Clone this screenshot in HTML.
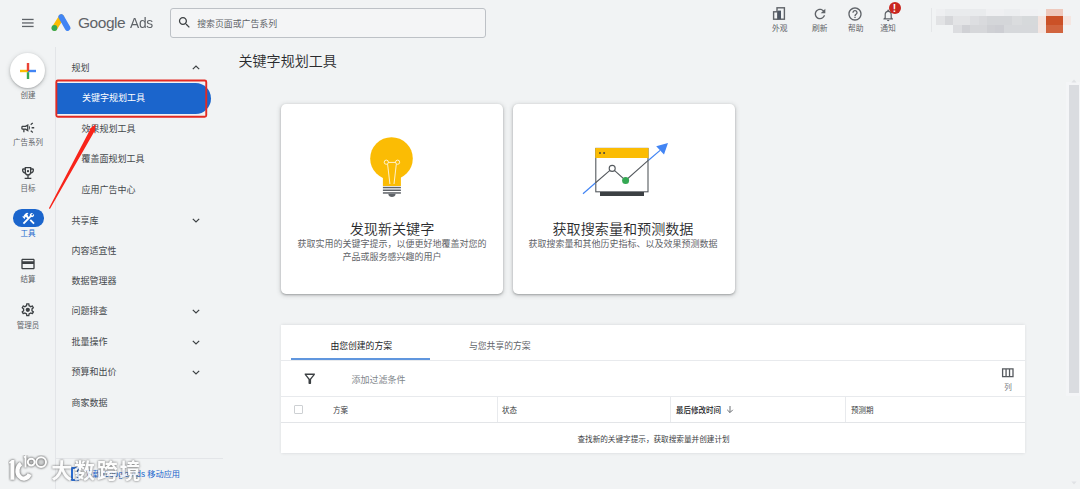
<!DOCTYPE html>
<html lang="zh-CN">
<head>
<meta charset="utf-8">
<title>关键字规划工具 - Google Ads</title>
<style>
html,body{margin:0;padding:0;}
body{width:1080px;height:489px;overflow:hidden;background:#f1f3f4;position:relative;
  font-family:"Liberation Sans","Noto Sans CJK SC",sans-serif;color:#3c4043;}
.abs{position:absolute;}
.t{position:absolute;white-space:nowrap;line-height:1;}
.mz{position:absolute;filter:blur(0.4px);}
#search{left:170px;top:8px;width:314px;height:28px;border:1px solid #bdc1c6;border-radius:3px;background:#f4f5f6;box-sizing:content-box;}
.rl{position:absolute;left:0;width:56px;text-align:center;font-size:7.5px;color:#5f6368;line-height:1;white-space:nowrap;}
.nv{position:absolute;font-size:9px;color:#44484c;line-height:1;white-space:nowrap;}
.chev{position:absolute;left:191.5px;width:8px;height:5px;}
.tl{position:absolute;font-size:7.75px;color:#5f6368;line-height:1;white-space:nowrap;}
.card{position:absolute;background:#fff;border-radius:5px;box-shadow:0 1px 2px rgba(60,64,67,.35),0 1px 4px 1px rgba(60,64,67,.18);}
.ct{position:absolute;left:0;width:100%;text-align:center;white-space:nowrap;line-height:1;}
.hl{position:absolute;left:281px;width:744px;height:1px;background:#e8eaed;}
.vl{position:absolute;top:397px;width:1px;height:25px;background:#e8eaed;}
.th{position:absolute;top:406.9px;font-size:7.5px;color:#3c4043;line-height:1;white-space:nowrap;}
</style>
</head>
<body>

<!-- ============ TOP BAR ============ -->
<svg class="abs" style="left:21px;top:18px" width="14" height="10" viewBox="0 0 14 10">
  <rect x="1" y="0.8" width="11.6" height="1.3" fill="#5f6368"/>
  <rect x="1" y="4.3" width="11.6" height="1.3" fill="#5f6368"/>
  <rect x="1" y="7.8" width="11.6" height="1.3" fill="#5f6368"/>
</svg>
<svg class="abs" style="left:50px;top:13px" width="22" height="19" viewBox="0 0 22 19">
  <line x1="11.4" y1="4.3" x2="4.6" y2="15" stroke="#fbbc04" stroke-width="5.6" stroke-linecap="round"/>
  <line x1="11.2" y1="3.9" x2="17.6" y2="15" stroke="#4285f4" stroke-width="5.6" stroke-linecap="round"/>
  <circle cx="4.4" cy="15" r="2.9" fill="#34a853"/>
</svg>
<div class="t" id="gads" style="left:78px;top:15px;font-size:15.5px;color:#5f6368;letter-spacing:-0.45px;">Google <span style="display:inline-block;transform:scaleX(.89);transform-origin:left center;margin-left:1.300px;letter-spacing:-0.3px;">Ads</span></div>

<div class="abs" id="search"></div>
<svg class="abs" style="left:177px;top:14.8px" width="15" height="15" viewBox="0 0 24 24">
  <path fill="#3c4043" d="M15.5 14h-.79l-.28-.27C15.41 12.59 16 11.11 16 9.5 16 5.91 13.09 3 9.500 3S3 5.910 3 9.500 5.910 16 9.500 16c1.610 0 3.090-.590 4.230-1.570l.27.28v.79l5 4.990L20.490 19l-4.990-5zm-6 0C7.010 14 5 11.990 5 9.500S7.010 5 9.500 5 14 7.010 14 9.500 11.990 14 9.500 14z"/>
</svg>
<div class="t" style="left:197.2px;top:19.6px;font-size:8.9px;color:#5f6368;">搜索页面或广告系列</div>

<!-- top-right icons -->
<svg class="abs" style="left:772px;top:6px" width="14" height="15" viewBox="0 0 14 15">
  <rect x="5" y="1.8" width="7.4" height="11.4" fill="none" stroke="#5f6368" stroke-width="1.4"/>
  <rect x="1.6" y="5.8" width="4.2" height="7.4" fill="#f1f3f4" stroke="#5f6368" stroke-width="1.4"/>
  <rect x="5.8" y="4.6" width="3.2" height="8.6" fill="#4d5663"/>
</svg>
<div class="tl" style="left:772px;top:24.95px;">外观</div>

<svg class="abs" style="left:811.5px;top:5.5px" width="16" height="16" viewBox="0 0 24 24">
  <path fill="#5f6368" d="M17.65 6.350C16.200 4.900 14.210 4 12 4c-4.420 0-7.990 3.580-7.990 8s3.570 8 7.990 8c3.730 0 6.840-2.550 7.730-6h-2.080c-.82 2.330-3.040 4-5.650 4-3.310 0-6-2.690-6-6s2.690-6 6-6c1.660 0 3.140.69 4.220 1.780L13 11h7V4l-2.350 2.350z"/>
</svg>
<div class="tl" style="left:812px;top:24.95px;">刷新</div>

<svg class="abs" style="left:847.2px;top:5.5px" width="16" height="16" viewBox="0 0 24 24">
  <path fill="#5f6368" d="M11 18h2v-2h-2v2zm1-16C6.480 2 2 6.480 2 12s4.480 10 10 10 10-4.480 10-10S17.520 2 12 2zm0 18c-4.410 0-8-3.590-8-8s3.590-8 8-8 8 3.590 8 8-3.590 8-8 8zm0-14c-2.210 0-4 1.790-4 4h2c0-1.100.9-2 2-2s2 .9 2 2c0 2-3 1.750-3 5h2c0-2.250 3-2.500 3-5 0-2.210-1.790-4-4-4z"/>
</svg>
<div class="tl" style="left:848px;top:24.95px;">帮助</div>

<svg class="abs" style="left:880.6px;top:7.6px" width="14.4" height="14.4" viewBox="0 0 24 24">
  <path fill="#5f6368" d="M12 22c1.100 0 2-.9 2-2h-4c0 1.100.9 2 2 2zm6-6v-5c0-3.070-1.630-5.640-4.500-6.320V4c0-.83-.67-1.500-1.500-1.500s-1.500.67-1.500 1.500v.68C7.640 5.360 6 7.920 6 11v5l-2 2v1h16v-1l-2-2zm-2 1H8v-6c0-2.480 1.510-4.500 4-4.500s4 2.020 4 4.500v6z"/>
</svg>
<div class="abs" style="left:888.6px;top:2.2px;width:12.2px;height:12.2px;border-radius:50%;background:#c9261f;"></div>
<div class="t" style="left:888.3px;top:4.1px;width:12.2px;text-align:center;font-size:10.200px;font-weight:bold;color:#fff;">!</div>
<div class="tl" style="left:880.3px;top:24.95px;">通知</div>

<!-- blurred account mosaic -->
<div class="abs" style="left:931px;top:8px;width:1px;height:24px;background:#e4e6e8;"></div>
<div class="mz" style="left:936.4px;top:9.3px;width:8.3px;height:6.9px;background:#eeeff1;"></div>
<div class="mz" style="left:944.8px;top:9.3px;width:41.7px;height:6.9px;background:#e9ebed;"></div>
<div class="mz" style="left:986.4px;top:9.3px;width:17.4px;height:6.9px;background:#eff0f2;"></div>
<div class="mz" style="left:1003.8px;top:9.3px;width:16.7px;height:6.9px;background:#eceef0;"></div>
<div class="mz" style="left:1020.4px;top:9.3px;width:17.4px;height:6.9px;background:#f0f1f3;"></div>
<div class="mz" style="left:1046.1px;top:9.3px;width:16.7px;height:6.9px;background:#eec9bd;"></div>
<div class="mz" style="left:936.4px;top:16.2px;width:8.3px;height:8.4px;background:#e2e3e5;"></div>
<div class="mz" style="left:944.8px;top:16.2px;width:8.3px;height:8.4px;background:#d6d7da;"></div>
<div class="mz" style="left:953.1px;top:16.2px;width:17.4px;height:8.4px;background:#e3e4e6;"></div>
<div class="mz" style="left:970.4px;top:16.2px;width:8.3px;height:8.4px;background:#dddee1;"></div>
<div class="mz" style="left:978.8px;top:16.2px;width:8.3px;height:8.4px;background:#d9dadd;"></div>
<div class="mz" style="left:987.1px;top:16.2px;width:25.0px;height:8.4px;background:#d4d6d9;"></div>
<div class="mz" style="left:1012.1px;top:16.2px;width:9.7px;height:8.4px;background:#dadcde;"></div>
<div class="mz" style="left:1021.8px;top:16.2px;width:16.0px;height:8.4px;background:#d6d9db;"></div>
<div class="mz" style="left:1037.8px;top:16.2px;width:8.3px;height:8.4px;background:#f4e4df;"></div>
<div class="mz" style="left:1046.1px;top:16.2px;width:16.7px;height:8.4px;background:#cb5127;"></div>
<div class="mz" style="left:1062.8px;top:16.2px;width:8.3px;height:8.4px;background:#f5e6e1;"></div>
<div class="mz" style="left:953.1px;top:24.6px;width:9.0px;height:8.3px;background:#dcdde0;"></div>
<div class="mz" style="left:962.1px;top:24.6px;width:8.3px;height:8.3px;background:#d0d1d5;"></div>
<div class="mz" style="left:970.4px;top:24.6px;width:16.7px;height:8.3px;background:#d6d7da;"></div>
<div class="mz" style="left:987.1px;top:24.6px;width:8.3px;height:8.3px;background:#cfd0d4;"></div>
<div class="mz" style="left:995.4px;top:24.6px;width:8.3px;height:8.3px;background:#cdced3;"></div>
<div class="mz" style="left:1003.8px;top:24.6px;width:34.0px;height:8.3px;background:#d6d8db;"></div>
<div class="mz" style="left:1037.8px;top:24.6px;width:8.3px;height:8.3px;background:#f3e6e2;"></div>
<div class="mz" style="left:1046.1px;top:24.6px;width:16.7px;height:8.3px;background:#d1643e;"></div>

<!-- ============ LEFT RAIL ============ -->
<div class="abs" style="left:55px;top:47px;width:1px;height:442px;background:#e3e5e8;"></div>
<div class="abs" style="left:10.2px;top:53.200px;width:35px;height:35px;border-radius:50%;background:#fff;box-shadow:0 1px 2px rgba(60,64,67,.3),0 1px 4px 1px rgba(60,64,67,.15);"></div>
<svg class="abs" style="left:18.7px;top:62px" width="18" height="18" viewBox="0 0 18 18">
  <rect x="1" y="7.800" width="8" height="2.400" fill="#fbbc04"/>
  <rect x="9" y="7.800" width="8" height="2.400" fill="#4285f4"/>
  <rect x="7.800" y="1" width="2.400" height="8" fill="#ea4335"/>
  <rect x="7.800" y="10.200" width="2.400" height="6.800" fill="#34a853"/>
</svg>
<div class="rl" style="top:91.8px;">创建</div>

<svg class="abs" style="left:20px;top:120px" width="15.5" height="15.5" viewBox="0 0 24 24">
  <path fill="#3c4043" fill-rule="evenodd" d="M18 11c0 .67 0 1.330 0 2 1.200 0 2.760 0 4 0 0-.67 0-1.330 0-2-1.240 0-2.800 0-4 0zM16 17.610c.96.71 2.210 1.650 3.200 2.390.4-.53.8-1.070 1.200-1.600-.99-.74-2.240-1.680-3.200-2.400-.4.54-.8 1.080-1.200 1.610zM20.400 5.600c-.4-.53-.8-1.070-1.200-1.600-.99.74-2.240 1.680-3.200 2.400.4.53.8 1.070 1.200 1.600.96-.72 2.210-1.650 3.200-2.400zM4 9c-1.100 0-2 .9-2 2v2c0 1.100.9 2 2 2h1v4h2v-4h1l5 3V6L8 9H4zm5.030 1.710L11 9.530v4.940l-1.970-1.180-.48-.29H4v-2h4.550l.48-.29zM15.500 12c0-1.330-.58-2.530-1.500-3.350v6.690c.92-.81 1.500-2.010 1.500-3.340z"/>
</svg>
<div class="rl" style="top:138.6px;">广告系列</div>

<svg class="abs" style="left:20.2px;top:164.8px" width="16" height="16" viewBox="0 0 24 24">
  <path fill="#3c4043" fill-rule="evenodd" d="M19 5h-2V3H7v2H5c-1.100 0-2 .9-2 2v1c0 2.550 1.920 4.630 4.390 4.940.63 1.500 1.980 2.630 3.610 2.960V19H7v2h10v-2h-4v-3.100c1.630-.33 2.980-1.460 3.610-2.960C19.080 12.630 21 10.550 21 8V7c0-1.100-.9-2-2-2zM5 8V7h2v3.820C5.840 10.400 5 9.300 5 8zm7 6c-1.650 0-3-1.350-3-3V5h6v6c0 1.650-1.350 3-3 3zm7-6c0 1.300-.84 2.400-2 2.820V7h2v1z"/>
  <circle cx="12" cy="9.200" r="1.700" fill="#3c4043"/>
</svg>
<div class="rl" style="top:184.6px;">目标</div>

<div class="abs" style="left:12.8px;top:209.3px;width:31.2px;height:17.6px;border-radius:8.8px;background:#1b65cc;"></div>
<svg class="abs" style="left:20.6px;top:211.2px" width="15" height="15" viewBox="0 0 24 24">
  <path fill="#fff" d="M13.783 15.172l2.121-2.121 5.996 5.996-2.121 2.121zM17.500 10c1.930 0 3.500-1.570 3.500-3.500 0-.58-.16-1.120-.41-1.600l-2.700 2.700-1.490-1.490 2.700-2.700c-.48-.25-1.020-.41-1.600-.41C15.570 3 14 4.570 14 6.500c0 .41.080.8.210 1.160l-1.850 1.850-1.780-1.780.71-.71-1.410-1.410L12 3.490c-1.170-1.170-3.070-1.170-4.240 0L4.220 7.030l1.410 1.410H2.810l-.71.71 3.540 3.540.71-.71V9.150l1.410 1.410.71-.71 1.780 1.780-7.410 7.410 2.120 2.120L16.340 9.790c.36.130.75.210 1.160.210z"/>
</svg>
<div class="rl" style="top:229.6px;color:#1b65cc;">工具</div>

<svg class="abs" style="left:20.2px;top:255.8px" width="16" height="16" viewBox="0 0 24 24">
  <path fill="#3c4043" d="M20 4H4c-1.110 0-1.990.89-1.990 2L2 18c0 1.110.89 2 2 2h16c1.110 0 2-.89 2-2V6c0-1.110-.89-2-2-2zm0 14H4v-6h16v6zm0-10H4V6h16v2z"/>
</svg>
<div class="rl" style="top:276px;">结算</div>

<svg class="abs" style="left:20.3px;top:302.2px" width="15.6" height="15.6" viewBox="0 0 24 24">
  <path fill="#3c4043" fill-rule="evenodd" d="M19.430 12.980c.04-.32.07-.64.07-.98 0-.34-.03-.66-.07-.98l2.110-1.650c.19-.15.24-.42.120-.64l-2-3.460c-.09-.16-.26-.25-.44-.25-.06 0-.12.010-.17.030l-2.490 1c-.52-.4-1.080-.73-1.690-.98l-.38-2.650C14.460 2.180 14.250 2 14 2h-4c-.25 0-.46.180-.49.420l-.38 2.650c-.61.250-1.170.59-1.690.98l-2.490-1c-.06-.02-.12-.03-.18-.03-.17 0-.34.090-.43.250l-2 3.460c-.13.220-.07.490.120.640l2.110 1.650c-.04.32-.07.650-.07.980 0 .33.030.66.070.98l-2.110 1.650c-.19.150-.24.420-.12.640l2 3.460c.09.160.26.250.44.250.06 0 .12-.010.17-.03l2.490-1c.52.400 1.080.73 1.690.98l.38 2.650c.03.240.24.420.49.420h4c.25 0 .46-.18.490-.42l.38-2.650c.61-.25 1.170-.59 1.690-.98l2.490 1c.06.020.12.030.18.030.17 0 .34-.09.430-.25l2-3.460c.12-.22.070-.49-.12-.64l-2.110-1.650zm-1.980-1.710c.04.310.05.520.05.730 0 .21-.02.430-.05.730l-.14 1.130.89.70 1.080.84-.7 1.210-1.270-.51-1.040-.42-.9.680c-.43.320-.84.560-1.250.73l-1.060.43-.16 1.130-.2 1.350h-1.400l-.19-1.350-.16-1.130-1.060-.43c-.43-.18-.83-.41-1.230-.71l-.91-.7-1.060.43-1.270.51-.7-1.210 1.080-.84.89-.7-.14-1.130c-.03-.31-.05-.54-.05-.74s.02-.43.050-.73l.14-1.130-.89-.7-1.080-.84.7-1.210 1.270.51 1.040.42.900-.68c.43-.32.840-.56 1.250-.73l1.060-.43.160-1.130.2-1.350h1.390l.19 1.350.16 1.130 1.060.43c.43.180.83.410 1.230.71l.91.7 1.060-.43 1.270-.51.7 1.210-1.070.85-.89.7.14 1.130z"/>
  <circle cx="12" cy="12" r="3.300" fill="#3c4043"/>
</svg>
<div class="rl" style="top:321.5px;">管理员</div>

<!-- ============ SECOND NAV ============ -->
<div class="nv" style="left:71.6px;top:63.9px;">规划</div>
<svg class="chev" style="top:65px" viewBox="0 0 8 5"><path d="M0.8 4.2 L4 1 L7.2 4.2" fill="none" stroke="#3c4043" stroke-width="1.2"/></svg>

<div class="abs" style="left:56px;top:83.200px;width:155px;height:30.800px;border-radius:0 15.400px 15.400px 0;background:#1b65cc;"></div>
<div class="nv" style="left:82px;top:94.1px;color:#fff;">关键字规划工具</div>
<svg class="abs" style="left:50px;top:76px" width="170" height="46" viewBox="50 76 170 46"><rect x="56.350" y="80.550" width="149.900" height="36.200" rx="1.500" fill="none" stroke="#e32a22" stroke-width="1.900"/></svg>

<div class="nv" style="left:81.6px;top:125.3px;">效果规划工具</div>
<div class="nv" style="left:81.6px;top:155.1px;">覆盖面规划工具</div>
<div class="nv" style="left:81.6px;top:185.7px;">应用广告中心</div>
<div class="nv" style="left:71.4px;top:216.7px;">共享库</div>
<svg class="chev" style="top:218.2px" viewBox="0 0 8 5"><path d="M0.8 0.8 L4 4 L7.2 0.8" fill="none" stroke="#3c4043" stroke-width="1.2"/></svg>
<div class="nv" style="left:71.4px;top:246.6px;">内容适宜性</div>
<div class="nv" style="left:71.4px;top:277.2px;">数据管理器</div>
<div class="nv" style="left:71.4px;top:307.4px;">问题排查</div>
<svg class="chev" style="top:309.4px" viewBox="0 0 8 5"><path d="M0.8 0.8 L4 4 L7.2 0.8" fill="none" stroke="#3c4043" stroke-width="1.2"/></svg>
<div class="nv" style="left:71.4px;top:337.8px;">批量操作</div>
<svg class="chev" style="top:339.6px" viewBox="0 0 8 5"><path d="M0.8 0.8 L4 4 L7.2 0.8" fill="none" stroke="#3c4043" stroke-width="1.2"/></svg>
<div class="nv" style="left:71.4px;top:368.1px;">预算和出价</div>
<svg class="chev" style="top:370.2px" viewBox="0 0 8 5"><path d="M0.8 0.8 L4 4 L7.2 0.8" fill="none" stroke="#3c4043" stroke-width="1.2"/></svg>
<div class="nv" style="left:71.4px;top:398.6px;">商家数据</div>

<div class="abs" style="left:56px;top:458px;width:167px;height:1px;background:#e3e5e8;"></div>
<div class="abs" style="left:70.600px;top:466.500px;width:8.200px;height:14px;border:2px solid #2a6bd0;border-radius:1px;box-sizing:border-box;"></div>
<div class="t" style="left:84px;top:471px;font-size:8.2px;color:#1b65cc;">下载 Google Ads 移动应用</div>

<!-- red arrow annotation -->
<svg class="abs" style="left:40px;top:110px" width="70" height="105" viewBox="40 110 70 105">
  <path d="M48.900 208.300 L49.900 208.900 L94.040 131.890 L94.620 133.110 L95.600 124.200 L88.650 129.870 L90 129.690 Z" fill="#f8241a"/>
</svg>

<!-- watermark -->
<div class="t" id="wm" style="left:51.300px;top:459.600px;font-size:21px;font-weight:700;color:#fff;letter-spacing:1.7px;filter:drop-shadow(0 0 0.8px rgba(60,60,60,.55)) drop-shadow(0.8px 0.8px 1px rgba(60,60,60,.45));opacity:.8;">大数跨境</div>
<svg class="abs" style="left:8px;top:455px" width="44" height="32" viewBox="0 0 44 32">
  <g fill="none" stroke="#fff" style="filter:drop-shadow(0 0 0.9px rgba(50,50,50,.7)) drop-shadow(0.5px 0.6px 1.1px rgba(50,50,50,.5));opacity:.86">
    <path d="M6.400 4.900 L3.700 4.900 L0.900 7.500 L1.700 8.700 L2.400 8.100 L2.400 24.650 L6.400 24.650 Z" fill="#fff" stroke="none"/>
    <path d="M13.04 8.69 A6.4 7.8 0 1 0 21.60 19.12" stroke-width="4.200"/>
    <path d="M16 2.400 L17.500 1.300 V12.400" stroke-width="1.900"/>
    <circle cx="23.200" cy="7.100" r="3.400" stroke-width="1.900" fill="rgba(110,110,110,.10)"/>
    <circle cx="33.100" cy="7.100" r="4.900" stroke-width="2" fill="rgba(110,110,110,.10)"/>
  </g>
</svg>

<!-- ============ MAIN ============ -->
<div class="t" style="left:238.5px;top:53.7px;font-size:14.05px;color:#2a2b2e;font-weight:350;">关键字规划工具</div>

<!-- card 1 -->
<div class="card" style="left:281px;top:104px;width:222px;height:189.5px;">
  <svg class="abs" style="left:80px;top:28px" width="60" height="70" viewBox="0 0 60 70">
    <circle cx="30.5" cy="26.5" r="21.3" fill="#fbbc04"/>
    <rect x="21.9" y="40" width="18" height="14" fill="#fbbc04"/>
    <g fill="none" stroke="#fff" stroke-width="0.8">
      <circle cx="25.3" cy="30.2" r="2.1"/><circle cx="36.600" cy="30.2" r="2.1"/>
      <path d="M27.4 30.4 H34.5 M26.6 32.2 L28.9 52 M35.3 32.2 L33 52"/>
    </g>
    <rect x="21.9" y="54.8" width="18" height="1.5" fill="#5f6368"/>
    <rect x="21.9" y="57.5" width="18" height="1.5" fill="#5f6368"/>
    <rect x="21.9" y="60.200" width="18" height="1.5" fill="#5f6368"/>
    <path d="M27.3 61.7 H34.6 C34.6 66 27.3 66 27.3 61.7 Z" fill="#5f6368"/>
  </svg>
  <div class="ct" style="top:118.4px;font-size:14.1px;color:#2a2b2e;font-weight:350;">发现新关键字</div>
  <div class="ct" style="top:136.4px;font-size:9px;color:#5f6368;">获取实用的关键字提示，以便更好地覆盖对您的</div>
  <div class="ct" style="top:148.9px;font-size:9px;color:#5f6368;">产品或服务感兴趣的用户</div>
</div>

<!-- card 2 -->
<div class="card" style="left:513px;top:104px;width:222px;height:189.5px;">
  <svg class="abs" style="left:60px;top:30px" width="110" height="70" viewBox="0 0 110 70">
    <rect x="22.8" y="14.4" width="52.2" height="43.4" fill="#fff" stroke="#54595e" stroke-width="1.1"/>
    <rect x="22.3" y="14" width="53.200" height="10" fill="#fbbc04"/>
    <circle cx="27" cy="19" r="0.95" fill="#3c4043"/><circle cx="31.100" cy="19" r="0.95" fill="#3c4043"/>
    <rect x="27" y="58" width="44" height="4" fill="#3c4043"/>
    <path d="M10 59.800 L22.300 49" fill="none" stroke="#4285f4" stroke-width="1.2"/>
    <path d="M75.500 26.200 L87.100 16.400" fill="none" stroke="#4285f4" stroke-width="1.2"/>
    <path d="M22.300 49 L39.200 34.400 L52.600 46.400 L75.500 26.200" fill="none" stroke="#54595e" stroke-width="1.1"/>
    <path d="M95 9 L83.200 12.300 L91 20.500 Z" fill="#4285f4"/>
    <circle cx="39.200" cy="34.400" r="3" fill="#fff" stroke="#54595e" stroke-width="1.1"/>
    <circle cx="52.600" cy="46.400" r="3.500" fill="#34a853"/>
  </svg>
  <div class="ct" style="left:-1px;top:118.4px;font-size:14.1px;color:#2a2b2e;font-weight:350;">获取搜索量和预测数据</div>
  <div class="ct" style="left:-1px;top:136.4px;font-size:9px;color:#5f6368;">获取搜索量和其他历史指标、以及效果预测数据</div>
</div>

<!-- table panel -->
<div class="abs" style="left:281px;top:325px;width:744px;height:128px;background:#fff;box-shadow:-0.5px 0 3px rgba(60,64,67,.16);"></div>
<div class="t" style="left:330.4px;top:341.85px;font-size:8.8px;color:#202124;">由您创建的方案</div>
<div class="t" style="left:469px;top:341.85px;font-size:8.8px;color:#5f6368;">与您共享的方案</div>
<div class="hl" style="top:360px;"></div>
<div class="abs" style="left:291.4px;top:358.3px;width:139px;height:1.9px;background:#6096de;"></div>

<svg class="abs" style="left:301.5px;top:370.6px" width="15.600" height="15.600" viewBox="0 0 24 24">
  <path fill="#3c4043" fill-rule="evenodd" d="M7 6h10l-5.010 6.300L7 6zm-2.750-.39C6.270 8.200 10 13 10 13v6c0 .55.45 1 1 1h2c.55 0 1-.45 1-1v-6s3.720-4.800 5.740-7.390c.51-.66.04-1.610-.79-1.610H5.040c-.83 0-1.300.95-.79 1.610z"/>
</svg>
<div class="t" style="left:351.600px;top:375.9px;font-size:9px;color:#80868b;">添加过滤条件</div>
<svg class="abs" style="left:999.7px;top:365.000px" width="15.600" height="15.600" viewBox="0 0 24 24">
  <path fill="#55595e" fill-rule="evenodd" d="M3 5v14h18V5H3zm5.330 12H5V7h3.330v10zm5.340 0h-3.330V7h3.330v10zM19 17h-3.330V7H19v10z"/>
</svg>
<div class="t" style="left:1004.2px;top:383.6px;font-size:7.6px;color:#777b80;">列</div>

<div class="hl" style="top:396px;"></div>
<div class="abs" style="left:293.900px;top:404.900px;width:9.2px;height:9.2px;border:1px solid #cdd0d3;border-radius:1px;box-sizing:border-box;"></div>
<div class="th" style="left:333px;">方案</div>
<div class="vl" style="left:497px;"></div>
<div class="th" style="left:502px;">状态</div>
<div class="vl" style="left:669.5px;"></div>
<div class="th" style="left:676px;color:#202124;font-weight:500;">最后修改时间</div>
<svg class="abs" style="left:726px;top:405px" width="8" height="9" viewBox="0 0 8 9">
  <path d="M4 1 V7.400 M1.200 4.800 L4 7.600 L6.800 4.800" fill="none" stroke="#5f6368" stroke-width="0.9"/>
</svg>
<div class="vl" style="left:845px;"></div>
<div class="th" style="left:851px;">预测期</div>
<div class="hl" style="top:422px;background:#e3e5e8;"></div>
<div class="t" style="left:281px;top:435.7px;width:745px;text-align:center;font-size:7.62px;color:#3c4043;">查找新的关键字提示，获取搜索量并创建计划</div>

<!-- scrollbar -->
<div class="abs" style="left:1066px;top:82px;width:14px;height:314px;background:#f4f5f7;"></div>
<div class="abs" style="left:1069px;top:85.400px;width:10px;height:308px;background:#dadce0;"></div>
<svg class="abs" style="left:1070px;top:78px" width="8" height="5" viewBox="0 0 8 5"><path d="M1.400 4.400 L4 1.400 L6.600 4.400 Z" fill="#e0e2e5"/></svg>
<svg class="abs" style="left:1070px;top:480.500px" width="8" height="5" viewBox="0 0 8 5"><path d="M1.400 0.600 L4 3.600 L6.600 0.600 Z" fill="#e0e2e5"/></svg>

</body>
</html>
